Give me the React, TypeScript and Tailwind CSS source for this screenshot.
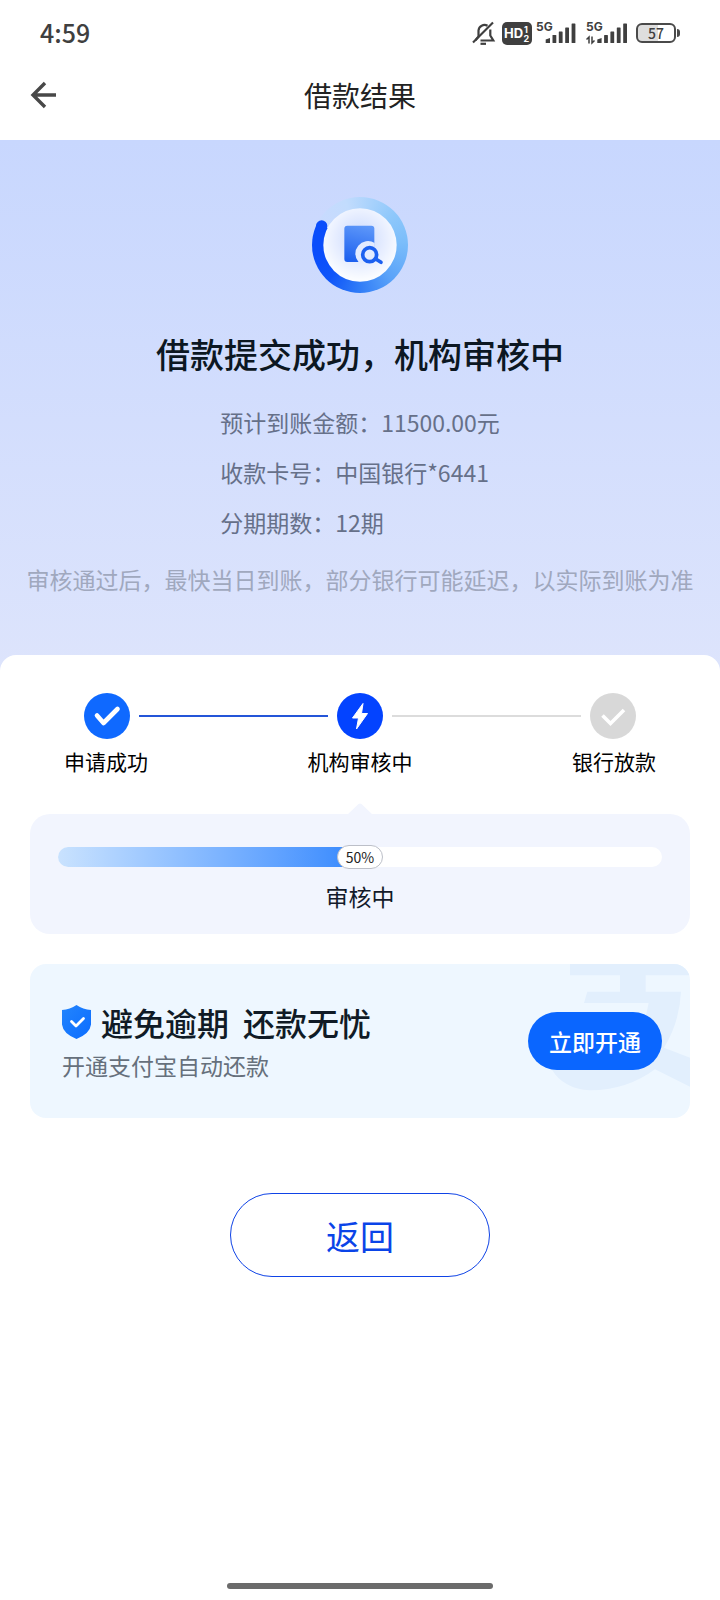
import type { ReactNode } from "react";

const details = [
  { label: "预计到账金额", value: "11500.00元" },
  { label: "收款卡号", value: "中国银行*6441" },
  { label: "分期期数", value: "12期" },
];

const progress = 50;

function Signal({ data = false }: { data?: boolean }) {
  return (
    <svg width="42" height="28" viewBox="0 -2 42 28" fill="#3f3f3f">
      <text
        x="0"
        y="10"
        className="font-['Inter','Noto_Sans_CJK_SC',sans-serif] text-[12px] font-bold"
      >
        5G
      </text>
      {data && (
        <path d="M.5 18.500L3 16v6.500M6 15.500V22l2.500-2.500" fill="none" stroke="#3f3f3f" strokeWidth="1.500" />
      )}
      <g transform={data ? "translate(1.6 0)" : undefined}>
        <path d="M9.700 22v-3.500l4.300-1.500v5z" />
        <rect x="16.5" y="14" width="3.8" height="8" rx="0.6" />
        <rect x="22.8" y="10.500" width="3.800" height="11.500" rx="0.6" />
        <rect x="29.2" y="6.500" width="3.800" height="15.500" rx="0.6" />
        <rect x="35.6" y="2.500" width="3.800" height="19.500" rx="0.6" />
      </g>
    </svg>
  );
}

function StatusBar() {
  return (
    <div className="flex h-[66px] items-center justify-between px-10 text-[#3f3f3f]">
      <span className="text-[25px] font-medium">4:59</span>
      <div className="flex items-center">
        <svg width="24" height="24" viewBox="0 0 24 24" fill="none" stroke="#3f3f3f" strokeWidth="2.2">
          <path d="M3.500 19.200L6.500 15.500V9.500a6 6 0 0 1 9-4.700" />
          <path d="M18.300 8.500v6l3 5H8.500" />
          <path d="M1 21.500L21 1.500" />
          <path d="M8.500 22.800h5.500" strokeWidth="2.200" />
        </svg>
        <svg className="ml-1.5" width="30" height="23" viewBox="0 0 30 23">
          <rect width="30" height="23" rx="5" fill="#3f3f3f" />
          <g fill="#fff" className="font-['Inter','Noto_Sans_CJK_SC',sans-serif] font-bold">
            <text x="2" y="16" className="text-[13px]">HD</text>
            <text x="22" y="10.5" className="text-[9px]">1</text>
            <text x="21.5" y="20" className="text-[9px]">2</text>
          </g>
        </svg>
        <div className="ml-1">
          <Signal />
        </div>
        <div className="ml-2">
          <Signal data />
        </div>
        <div className="ml-2 flex items-center gap-px">
          <div className="flex h-5 w-10 items-center justify-center rounded-md border-2 border-[#4a4a4a] bg-linear-to-r from-[#dedede] from-55% to-white to-55% text-[14px] font-medium">
            57
          </div>
          <div className="h-2 w-[3px] rounded-r-sm bg-[#4a4a4a]" />
        </div>
      </div>
    </div>
  );
}

function ReviewIcon() {
  return (
    <div className="size-24 rounded-full bg-[conic-gradient(from_297deg,#c9dafe_0deg,#c2dcfd_45deg,#8fc8fb_110deg,#7bbdfa_150deg,#5aa3f9_200deg,#2f7bf7_245deg,#0f55f9_285deg,#0a4dfb_320deg,#0a4dfb_360deg)]">
      <svg width="96" height="96" viewBox="68 51 288 288">
        <defs>
          <radialGradient id="disc" cx="0.5" cy="0.42" r="0.55">
            <stop offset="0" stopColor="#c8d8fd" />
            <stop offset="0.6" stopColor="#e6edff" />
            <stop offset="1" stopColor="#fafcff" />
          </radialGradient>
          <linearGradient id="doc" x1="0.6" y1="0" x2="0.4" y2="1">
            <stop offset="0" stopColor="#5c96f9" />
            <stop offset="1" stopColor="#1e61ef" />
          </linearGradient>
        </defs>
        <circle cx="97" cy="138" r="17" fill="#0a4dfb" />
        <circle cx="212" cy="195" r="110" fill="url(#disc)" />
        <rect x="165" y="137" width="90" height="109" rx="9" fill="url(#doc)" />
        <path d="M208 247a38 38 0 0 1 48-58v58z" fill="#e3ebff" />
        <circle cx="241" cy="224" r="21" fill="none" stroke="#1c60f0" strokeWidth="11" />
        <path d="M258 236l17 11" stroke="#1c60f0" strokeWidth="11" strokeLinecap="round" />
      </svg>
    </div>
  );
}

function StepCircle({ className, children }: { className: string; children: ReactNode }) {
  return (
    <div className={`size-[46px] shrink-0 rounded-full ${className}`}>
      <svg width="46" height="46" viewBox="0 0 46 46" fill="none" stroke="#fff">
        {children}
      </svg>
    </div>
  );
}

function Steps() {
  return (
    <div>
      <div className="flex items-center gap-[9px] px-[84px]">
        <StepCircle className="bg-[#0f69ff]">
          <path d="M13 22.500l6.500 7.500L33.500 16" strokeWidth="4.600" strokeLinecap="round" strokeLinejoin="round" />
        </StepCircle>
        <div className="h-0.5 flex-1 bg-[#2455d8]" />
        <StepCircle className="bg-[#0343ff]">
          <path
            d="M26 10.500L15.500 25h6L19.500 36 30.500 20.500h-6z"
            fill="#fff"
            strokeWidth="1"
            strokeLinejoin="round"
          />
        </StepCircle>
        <div className="h-0.5 flex-1 bg-[#dcdcdc]" />
        <StepCircle className="bg-[#d8d8d8]">
          <path d="M12.500 22.500l8 8L34 17" strokeWidth="3.600" />
        </StepCircle>
      </div>
      <ol className="mt-[7px] flex justify-between px-16 text-[21px] leading-[30px] text-black">
        <li>申请成功</li>
        <li>机构审核中</li>
        <li>银行放款</li>
      </ol>
    </div>
  );
}

function ReviewProgress() {
  return (
    <section className="relative mx-[30px] mt-[38px] rounded-[20px] bg-[#f2f5fe] px-7 pt-[33px] pb-[22px]">
      <svg className="absolute -top-[11px] left-1/2 -translate-x-1/2" width="26" height="12" viewBox="0 0 26 12">
        <path d="M0 12L11.500 1q1.500-1.200 3 0L26 12z" fill="#f2f5fe" />
      </svg>
      <div
        role="progressbar"
        aria-valuenow={progress}
        aria-label="审核中"
        className="relative h-5 rounded-full bg-white"
      >
        <div
          className="h-full rounded-l-full bg-linear-to-r from-[#c9e2fe] to-[#3488fd]"
          style={{ width: `${progress}%` }}
        />
        <span
          className="absolute top-1/2 flex h-6 w-[46px] -translate-x-1/2 -translate-y-1/2 items-center justify-center rounded-full border border-[#bcbfc8] bg-white text-[14px] text-[#222]"
          style={{ left: `${progress}%` }}
        >
          {progress}%
        </span>
      </div>
      <p className="mt-[13px] text-center text-[23px] leading-8 text-[#131a2a]">审核中</p>
    </section>
  );
}

function AutoRepayCard() {
  return (
    <section className="relative mx-[30px] mt-[30px] flex items-center justify-between overflow-hidden rounded-2xl bg-[#eef7ff] py-9 pr-7 pl-8">
      <svg
        className="absolute top-0 right-0"
        width="190"
        height="154"
        viewBox="0 43 570 462"
        fill="#e2effd"
      >
        <path d="M210 43H570V77H437V126H543Q538 220 492 294L570 324V411L465 359Q380 422 270 422Q190 418 155 359V300H400Q430 240 446 160H252L262 126H360V77H210z" />
      </svg>
      <div>
        <div className="flex items-center gap-2.5">
          <svg width="29" height="34" viewBox="0 0 29 34">
            <defs>
              <linearGradient id="shield" x1="0" y1="0" x2="1" y2="1">
                <stop offset="0" stopColor="#2385fd" />
                <stop offset="1" stopColor="#0b6cff" />
              </linearGradient>
            </defs>
            <path d="M14.500 0Q21 4.500 29 5v14.500Q28 28.500 14.500 34Q1 28.500 0 19.500V5Q8 4.500 14.500 0z" fill="url(#shield)" />
            <path d="M9.500 16.500l4.500 4.500 7.500-7.500" fill="none" stroke="#fff" strokeWidth="2.800" strokeLinecap="round" strokeLinejoin="round" />
          </svg>
          <h2 className="flex gap-3.5 text-[32px] leading-[44px] font-medium text-[#101b26]">
            <span>避免逾期</span>
            <span>还款无忧</span>
          </h2>
        </div>
        <p className="mt-1 text-[23px] leading-[34px] text-[#66707c]">开通支付宝自动还款</p>
      </div>
      <button
        type="button"
        className="relative h-[58px] w-[134px] rounded-full bg-[#0a66ff] text-[23px] font-medium text-white"
      >
        立即开通
      </button>
    </section>
  );
}

export default function App() {
  return (
    <div
      lang="zh-CN"
      className="flex min-h-screen flex-col bg-white font-['Noto_Sans_CJK_SC',sans-serif]"
    >
      <StatusBar />
      <header className="grid h-[74px] grid-cols-[1fr_auto_1fr] items-center px-[30px] pb-4">
        <button type="button" aria-label="返回" className="justify-self-start">
          <svg width="26" height="28" viewBox="0 0 26 28" fill="none" stroke="#484848" strokeWidth="3.400">
            <path d="M15 2L3 14l12 12M3 14h23" />
          </svg>
        </button>
        <h1 className="text-[28px] leading-10 text-[#222]">借款结果</h1>
      </header>

      <section className="flex flex-col items-center bg-linear-to-b from-[#c8d7fe] to-[#dde4fc] pt-[57px] pb-[75px]">
        <ReviewIcon />
        <h2 className="mt-[37px] text-[34px] leading-[48px] font-medium text-[#0c1722]">
          借款提交成功，机构审核中
        </h2>
        <dl className="mt-[19px] text-[23px] leading-[50px] text-[#667089]">
          {details.map((item) => (
            <div key={item.label} className="flex">
              <dt>{item.label}：</dt>
              <dd>{item.value}</dd>
            </div>
          ))}
        </dl>
        <p className="mt-[15px] text-[23px] leading-[34px] text-[#a0a8be]">
          审核通过后，最快当日到账，部分银行可能延迟，以实际到账为准
        </p>
      </section>

      <main className="-mt-4 flex flex-1 flex-col rounded-t-2xl bg-white pt-[38px] pb-[11px]">
        <Steps />
        <ReviewProgress />
        <AutoRepayCard />
        <button
          type="button"
          className="mt-[75px] h-[84px] w-[260px] self-center rounded-full border border-[#0f43e6] text-[34px] text-[#0a44e8]"
        >
          返回
        </button>
        <div className="mt-auto h-1.5 w-[266px] self-center rounded-full bg-[#6b6b6b]" />
      </main>
    </div>
  );
}
